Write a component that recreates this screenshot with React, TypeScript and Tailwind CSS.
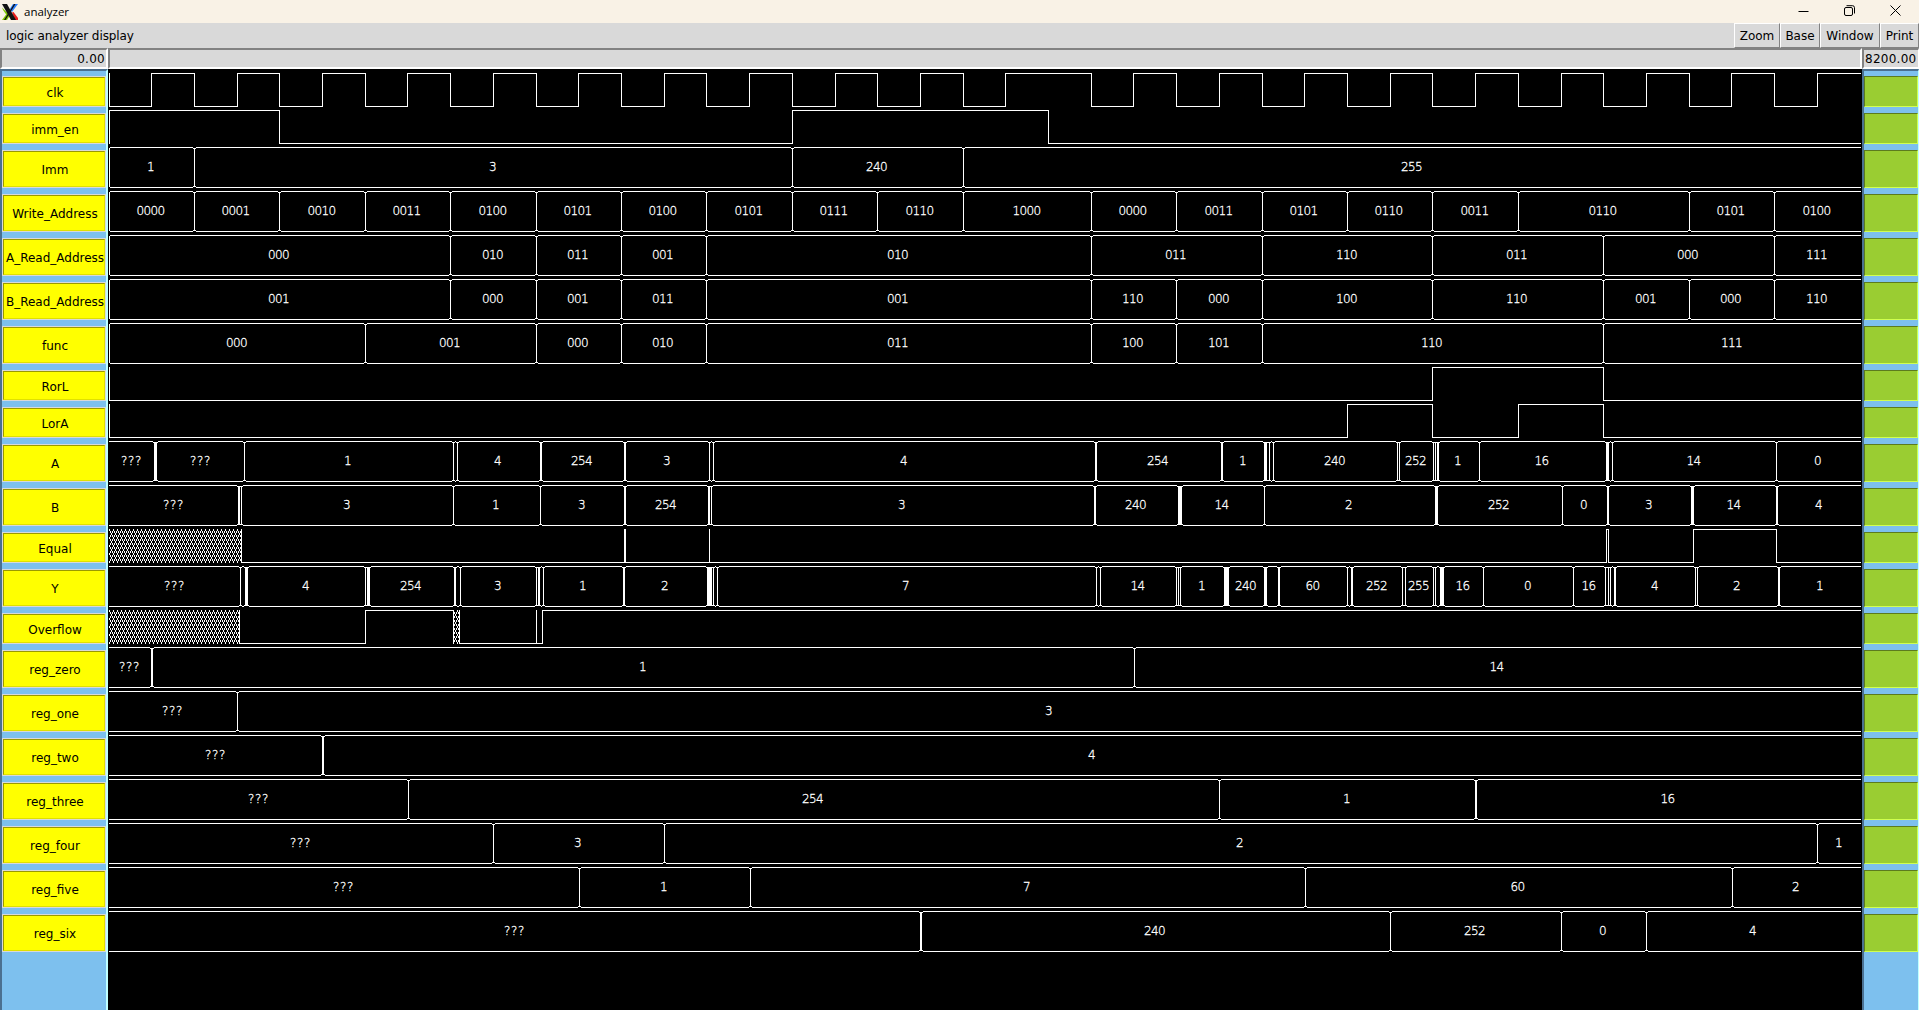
import React from "react";

const ORIGIN = 108;
const END = 1861;
const PX_PER_UNIT = 0.21353;

const at = (t: number) => Math.floor(109 + t * PX_PER_UNIT);

type Mark = [from: number, to: number];
type BusSignal = { kind: "bus"; name: string; marks: Mark[]; values: string[] };
// Level steps: "x" is the undefined, hatched state.
type Step = [x: number, level: 0 | 1 | "x"];
type BitSignal = { kind: "bit"; name: string; steps: Step[] };
type Signal = BusSignal | BitSignal;

const timedBus = (name: string, times: number[], values: string): BusSignal => ({
  kind: "bus",
  name,
  marks: [[109, 109] as Mark, ...times.map((t) => [at(t), at(t)] as Mark)],
  values: values.split(" "),
});

// Values use "-" for segments that are too narrow for a label.
const bus = (name: string, marks: (number | Mark)[], values: string): BusSignal => ({
  kind: "bus",
  name,
  marks: [[108, 108] as Mark, ...marks.map((m) => (typeof m === "number" ? ([m, m] as Mark) : m))],
  values: values.split(" "),
});

const timedBit = (name: string, times: number[], first: 0 | 1): BitSignal => ({
  kind: "bit",
  name,
  steps: [[109, first], ...times.map((t, i) => [at(t), (i % 2 === 0 ? 1 - first : first) as 0 | 1] as Step)],
});

// The clock stays high over the edge at 4400.
const clockTimes = Array.from({ length: 40 }, (_, i) => (i + 1) * 200).filter((t) => t !== 4400);

const signals: Signal[] = [
  timedBit("clk", clockTimes, 0),
  timedBit("imm_en", [800, 3200, 4400], 1),
  timedBus("Imm", [400, 3200, 4000], "1 3 240 255"),
  timedBus(
    "Write_Address",
    [400, 800, 1200, 1600, 2000, 2400, 2800, 3200, 3600, 4000, 4600, 5000, 5400, 5800, 6200, 6600, 7400, 7800],
    "0000 0001 0010 0011 0100 0101 0100 0101 0111 0110 1000 0000 0011 0101 0110 0011 0110 0101 0100",
  ),
  timedBus(
    "A_Read_Address",
    [1600, 2000, 2400, 2800, 4600, 5400, 6200, 7000, 7800],
    "000 010 011 001 010 011 110 011 000 111",
  ),
  timedBus(
    "B_Read_Address",
    [1600, 2000, 2400, 2800, 4600, 5000, 5400, 6200, 7000, 7400, 7800],
    "001 000 001 011 001 110 000 100 110 001 000 110",
  ),
  timedBus("func", [1200, 2000, 2400, 2800, 4600, 5000, 5400, 7000], "000 001 000 010 011 100 101 110 111"),
  timedBit("RorL", [6200, 7000], 0),
  timedBit("LorA", [5800, 6200, 6600, 7000], 0),
  bus(
    "A",
    [
      [154, 156], 244, 453, 457, [540, 541], [624, 625], 709, 713, [1095, 1096], [1221, 1222], [1264, 1266], 1269,
      1273, 1397, 1399, 1433, 1435, [1437, 1438], 1479, [1606, 1608], 1612, 1776,
    ],
    "??? ??? 1 - 4 254 3 - 4 254 1 - - 240 - 252 - - 1 16 - 14 0",
  ),
  bus(
    "B",
    [
      [238, 239], 241, 453, 540, [624, 625], [708, 709], 711, [1094, 1095], [1178, 1181], 1264, [1435, 1437], 1562,
      [1607, 1608], [1691, 1693], [1776, 1777],
    ],
    "??? - 3 1 3 254 - 3 240 14 2 252 0 3 14 4",
  ),
  {
    kind: "bit",
    name: "Equal",
    steps: [
      [109, "x"], [241, 0], [624, 1], [625, 0], [709, 1], [709, 0], [1606, 1], [1608, 0], [1693, 1], [1776, 0],
    ],
  },
  bus(
    "Y",
    [
      240, [245, 247], 365, [367, 369], [454, 455], 460, 536, [538, 539], 543, [623, 624], [707, 711], 713, 717,
      1096, 1100, 1176, 1178, 1180, [1224, 1228], [1264, 1266], [1278, 1279], 1347, [1351, 1352], 1402, 1405, 1433,
      1435, [1440, 1443], 1483, 1573, 1605, 1608, 1610, [1614, 1615], 1695, 1697, [1778, 1779],
    ],
    "??? - 4 - 254 - 3 - - 1 2 - - 7 - 14 - - 1 240 - 60 - 252 - 255 - - 16 0 16 - - - 4 - 2 1",
  ),
  {
    kind: "bit",
    name: "Overflow",
    steps: [[109, "x"], [239, 0], [365, 1], [453, "x"], [459, 0], [536, 1], [536, 0], [542, 1]],
  },
  bus("reg_zero", [[151, 152], 1134], "??? 1 14"),
  bus("reg_one", [237], "??? 3"),
  bus("reg_two", [[322, 323]], "??? 4"),
  bus("reg_three", [408, 1219, [1475, 1476]], "??? 254 1 16"),
  bus("reg_four", [493, 664, 1817], "??? 3 2 1"),
  bus("reg_five", [579, 750, 1305, 1732], "??? 1 7 60 2"),
  bus("reg_six", [[920, 921], 1390, 1561, 1646], "??? 240 252 0 4"),
];

function BusWave({ signal }: { signal: BusSignal }) {
  const { marks, values } = signal;
  const segments = marks.map((m, i) => ({ from: m[1], to: marks[i + 1]?.[0] ?? END }));
  const lines = segments
    .filter((s) => s.to - s.from > 2)
    .map((s) => {
      const last = s.to === END;
      const a = s.from + (s.from <= 109 ? 1 : 2);
      const w = (last ? s.to : s.to - 1) - a;
      return `M${a} 0h${w}v1h${-w}zM${a} 40h${w}v1h${-w}z`;
    })
    .join("");
  const bars = marks
    .filter((m) => m[0] > 108)
    .map(([a, b]) => {
      const w = b - a + 1;
      if (a === 109) return `M109 1h1v39h-1z`;
      return `M${a} 2h${w}v37h${-w}zM${a - 1} 1h${w + 2}v1h${-w - 2}zM${a - 1} 39h${w + 2}v1h${-w - 2}z`;
    })
    .join("");
  return (
    <svg
      className="block h-[44px] w-[1754px] shrink-0"
      viewBox={`${ORIGIN} 0 1754 44`}
      shapeRendering="crispEdges"
    >
      <path d={lines + bars} fill="#fff" />
      {segments.map((s, i) =>
        values[i] === "-" ? null : (
          <text
            key={i}
            x={Math.floor((s.from + s.to) / 2) + (values[i] === "???" ? 0.4 : -0.5)}
            y={24}
            textAnchor="middle"
            className={`fill-white stroke-white stroke-[0.3px] font-['DejaVu_Sans'] text-[12px] font-extralight ${
              values[i] === "???" ? "tracking-[0.63px]" : "tracking-[-0.63px]"
            }`}
          >
            {values[i]}
          </text>
        ),
      )}
    </svg>
  );
}

function BitWave({ signal }: { signal: BitSignal }) {
  const { steps } = signal;
  let d = "";
  const hatched: [number, number][] = [];
  steps.forEach(([x, level], i) => {
    const to = steps[i + 1]?.[0] ?? END - 1;
    const w = to - x + 1;
    d += i === 0 && level === "x" ? "" : `M${x} 0h1v34h-1z`;
    if (level === "x") hatched.push([x, to]);
    else if (w > 1) d += `M${x} ${level ? 0 : 33}h${w}v1h${-w}z`;
  });
  return (
    <svg
      className="block h-[37px] w-[1754px] shrink-0"
      viewBox={`${ORIGIN} 0 1754 37`}
      shapeRendering="crispEdges"
    >
      {hatched.map(([a, b]) => (
        <rect key={a} x={a} y={0} width={b - a} height={34} fill="url(#hatch)" />
      ))}
      <path d={d} fill="#fff" />
    </svg>
  );
}

function MenuButton({ label, width }: { label: string; width: string }) {
  return (
    <button
      className={`${width} h-[25px] shrink-0 overflow-hidden border border-t-white border-r-[#828282] border-b-[#828282] border-l-white text-center whitespace-nowrap`}
    >
      {label}
    </button>
  );
}

function XLogo() {
  return (
    <svg className="h-4 w-4" viewBox="0 0 16 16">
      <path d="M11 0h5L10 8 7.500 5.500z" fill="#2a7fff" />
      <path d="M0 16h5L8.500 10.500 6 8z" fill="#7ec800" />
      <path d="M0 3.500L5.500 9 4.500 11 1 6z" fill="#7ec800" />
      <path d="M10 8.500L11.500 8 16 14V16H13z" fill="#e81c1c" />
      <path d="M0 0h5l9 16H9z" fill="#111" />
      <path d="M12 0H13.500L3.500 16H2z" fill="#111" />
    </svg>
  );
}

function TitleBar() {
  return (
    <header className="flex h-[23px] shrink-0 items-center bg-[#f9f2e6] pl-[2px]">
      <XLogo />
      <span className="ml-[6px] pt-px font-['Open_Sans'] text-[11.5px] leading-none text-black">analyzer</span>
      <div className="mr-[18px] ml-auto flex items-center gap-[35px] pb-[2px]">
        <svg className="h-[11px] w-[11px]" viewBox="0 0 11 11">
          <path d="M0.500 6.500h10" stroke="#000" fill="none" />
        </svg>
        <svg className="h-[11px] w-[11px]" viewBox="0 0 11 11" fill="none" stroke="#000">
          <rect x="0.500" y="2.500" width="8" height="8" rx="1.500" />
          <path d="M2.500 0.700H8.500a2 2 0 0 1 2 2V8.500" />
        </svg>
        <svg className="h-[11px] w-[11px]" viewBox="0 0 11 11">
          <path d="M0.500 0.500l10 10M10.500 0.500l-10 10" stroke="#000" fill="none" />
        </svg>
      </div>
    </header>
  );
}

export default function App() {
  return (
    <div className="flex h-[1010px] w-[1919px] flex-col overflow-hidden bg-black font-['DejaVu_Sans'] text-[12px] text-black">
      <svg className="absolute h-0 w-0">
        <defs>
          <pattern id="hatch" x="109" y="0" width="4" height="8" patternUnits="userSpaceOnUse">
            <path
              d="M0 0h1v2h-1zM1 2h1v2h-1zM3 2h1v2h-1zM2 4h1v2h-1zM1 6h1v2h-1zM3 6h1v2h-1z"
              fill="#fff"
              shapeRendering="crispEdges"
            />
          </pattern>
        </defs>
      </svg>

      <TitleBar />

      <nav className="flex h-[25px] shrink-0 items-center bg-[#d9d9d9] pl-[6px]">
        <span className="tracking-[-0.09px]">logic analyzer display</span>
        <div className="ml-auto flex">
          <MenuButton label="Zoom" width="w-[46px]" />
          <MenuButton label="Base" width="w-[40px]" />
          <MenuButton label="Window" width="w-[60px]" />
          <MenuButton label="Print" width="w-[39px]" />
        </div>
      </nav>

      <div className="flex h-[21px] shrink-0 bg-[#d9d9d9] leading-[19px] tracking-[0.27px]">
        <div className="w-[108px] border-2 border-t-[#828282] border-r-white border-b-white border-l-[#828282] pr-[1px] text-right">
          0.00
        </div>
        <div className="w-[1754px] border-2 border-t-[#828282] border-r-white border-b-white border-l-[#828282]" />
        <div className="w-[57px] overflow-hidden border-2 border-r border-t-[#828282] border-r-white border-b-white border-l-[#828282] pl-px whitespace-nowrap">
          8200.00
        </div>
      </div>

      <main className="flex min-h-0 flex-1">
        <aside className="flex w-[108px] shrink-0 flex-col border-2 border-b-0 border-t-[#4b7090] border-r-[#bfffff] border-l-[#4b7090] bg-[#7dc0ee] pt-[5px]">
          {signals.map((s) => (
            <div
              key={s.name}
              className={`${s.kind === "bit" ? "h-[31px]" : "h-[38px]"} mb-[6px] shrink-0 border border-[#d9d9d9]`}
            >
              <div className="flex h-full items-center justify-center border border-t-[#999900] border-r-[#e0e000] border-b-[#e0e000] border-l-[#999900] bg-[#ffff00] pt-[2px] pl-[2px] leading-none whitespace-nowrap">
                {s.name}
              </div>
            </div>
          ))}
        </aside>

        <section className="flex w-[1754px] shrink-0 flex-col bg-black pt-[4px]">
          {signals.map((s) =>
            s.kind === "bus" ? <BusWave key={s.name} signal={s} /> : <BitWave key={s.name} signal={s} />,
          )}
        </section>

        <aside className="flex w-[57px] shrink-0 flex-col border-2 border-r border-b-0 border-t-[#4b7090] border-r-[#bfffff] border-l-[#4b7090] bg-[#7dc0ee] pt-[5px]">
          {signals.map((s) => (
            <div
              key={s.name}
              className={`${s.kind === "bit" ? "h-[31px]" : "h-[38px]"} mb-[6px] shrink-0 border border-t-[#5c7b1e] border-r-[#d0ff50] border-b-[#d0ff50] border-l-[#5c7b1e] bg-[#9acd32]`}
            />
          ))}
        </aside>
      </main>
    </div>
  );
}
